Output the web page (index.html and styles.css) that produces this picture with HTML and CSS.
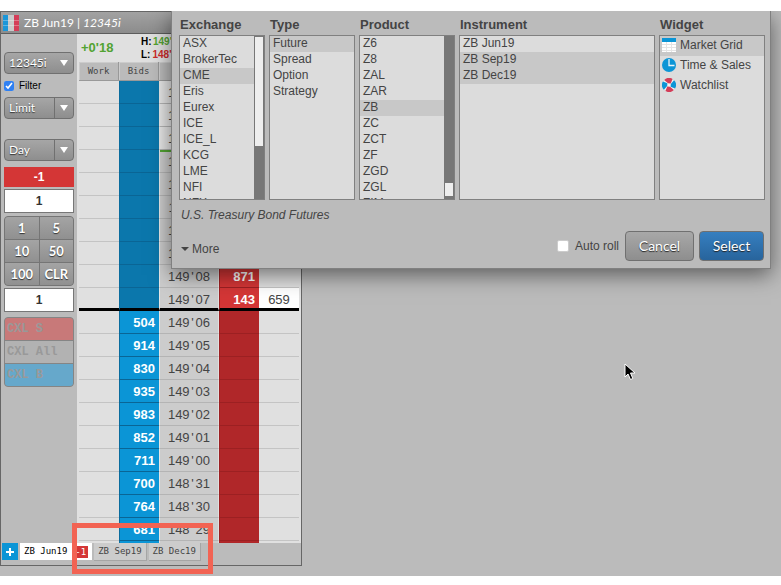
FILE: index.html
```html
<!DOCTYPE html>
<html lang="en">
<head>
<meta charset="utf-8">
<title>Market workspace</title>
<link rel="stylesheet" href="styles.css">
</head>
<body>
<main class="desktop">
  <section class="trader">
    <header class="titlebar">
      <svg class="logo" width="16" height="16" viewBox="0 0 16 16" aria-hidden="true">
        <rect width="5" height="16" fill="#1b96d8"/><rect x="5" width="6" height="16" fill="#c9c9c9"/><rect x="11" width="5" height="16" fill="#d43d58"/>
        <path d="M0 5.5h16M0 10.5h16" stroke="#fff" stroke-opacity=".3"/>
      </svg>
      <h1>ZB Jun19 | <em>12345i</em></h1>
    </header>
    <div class="body">
      <form class="sidebar">
        <div class="drop"><select aria-label="Account"><option>12345i</option></select></div>
        <label class="filter"><input type="checkbox" checked>Filter</label>
        <div class="drop split"><select aria-label="Order type"><option>Limit</option></select></div>
        <div class="drop split tif"><select aria-label="Time in force"><option>Day</option></select></div>
        <output class="position">-1</output>
        <input class="qty" type="text" value="1" aria-label="Quantity">
        <div class="keypad">
          <button type="button">1</button><button type="button">5</button>
          <button type="button">10</button><button type="button">50</button>
          <button type="button">100</button><button type="button">CLR</button>
        </div>
        <input class="qty" type="text" value="1" aria-label="Second quantity">
        <div class="cancel">
          <button type="button" class="sell" disabled>CXL S</button>
          <button type="button" disabled>CXL All</button>
          <button type="button" class="buy" disabled>CXL B</button>
        </div>
      </form>
      <div class="ladder">
        <div class="stats">
          <strong class="net">+0'18</strong>
          <dl>
            <div><dt>H:</dt><dd class="up">149'</dd></div>
            <div><dt>L:</dt><dd class="down">148'</dd></div>
          </dl>
        </div>
        <table>
          <thead><tr><th>Work</th><th>Bids</th><th class="wide"></th><th></th><th></th></tr></thead>
          <tbody class="above">
            <tr class="out"><td></td><td></td><td>149<i>'</i>16</td><td></td><td></td></tr>
            <tr class="out"><td></td><td></td><td>149<i>'</i>15</td><td></td><td></td></tr>
            <tr class="out"><td></td><td></td><td>149<i>'</i>14</td><td></td><td></td></tr>
            <tr class="high"><td></td><td></td><td>149<i>'</i>13</td><td></td><td></td></tr>
            <tr><td></td><td></td><td>149<i>'</i>12</td><td></td><td></td></tr>
            <tr><td></td><td></td><td>149<i>'</i>11</td><td></td><td></td></tr>
            <tr><td></td><td></td><td>149<i>'</i>10</td><td></td><td></td></tr>
            <tr><td></td><td></td><td>149<i>'</i>09</td><td></td><td></td></tr>
            <tr><td></td><td></td><td>149<i>'</i>08</td><td>871</td><td></td></tr>
            <tr class="inside"><td></td><td></td><td>149<i>'</i>07</td><td>143</td><td class="last">659</td></tr>
          </tbody>
          <tbody class="below">
            <tr><td></td><td>504</td><td>149<i>'</i>06</td><td></td><td></td></tr>
            <tr><td></td><td>914</td><td>149<i>'</i>05</td><td></td><td></td></tr>
            <tr><td></td><td>830</td><td>149<i>'</i>04</td><td></td><td></td></tr>
            <tr><td></td><td>935</td><td>149<i>'</i>03</td><td></td><td></td></tr>
            <tr><td></td><td>983</td><td>149<i>'</i>02</td><td></td><td></td></tr>
            <tr><td></td><td>852</td><td>149<i>'</i>01</td><td></td><td></td></tr>
            <tr><td></td><td>711</td><td>149<i>'</i>00</td><td></td><td></td></tr>
            <tr><td></td><td>700</td><td>148<i>'</i>31</td><td></td><td></td></tr>
            <tr><td></td><td>764</td><td>148<i>'</i>30</td><td></td><td></td></tr>
            <tr><td></td><td>681</td><td>148<i>'</i>29</td><td></td><td></td></tr>
            <tr class="stub"><td></td><td></td><td></td><td></td><td></td></tr>
          </tbody>
        </table>
      </div>
    </div>
    <nav class="tabs">
      <button type="button" class="add" aria-label="Add tab"><svg width="10" height="10" viewBox="0 0 10 10" aria-hidden="true"><path d="M5 1v8M1 5h8" stroke="#fff" stroke-width="2"/></svg></button>
      <button type="button" class="tab active">ZB Jun19<span class="badge">-1</span></button>
      <button type="button" class="tab">ZB Sep19</button>
      <button type="button" class="tab">ZB Dec19</button>
    </nav>
  </section>

  <section class="dialog" role="dialog" aria-label="Select instrument">
    <div class="columns">
      <div class="col exchange">
        <h2>Exchange</h2>
        <div class="list">
          <ul>
            <li><button type="button">ASX</button></li>
            <li><button type="button">BrokerTec</button></li>
            <li><button type="button" class="on">CME</button></li>
            <li><button type="button">Eris</button></li>
            <li><button type="button">Eurex</button></li>
            <li><button type="button">ICE</button></li>
            <li><button type="button">ICE_L</button></li>
            <li><button type="button">KCG</button></li>
            <li><button type="button">LME</button></li>
            <li><button type="button">NFI</button></li>
            <li><button type="button">NFX</button></li>
          </ul>
          <div class="track"><div class="thumb"></div></div>
        </div>
      </div>
      <div class="col type">
        <h2>Type</h2>
        <div class="list">
          <ul>
            <li><button type="button" class="on">Future</button></li>
            <li><button type="button">Spread</button></li>
            <li><button type="button">Option</button></li>
            <li><button type="button">Strategy</button></li>
          </ul>
        </div>
      </div>
      <div class="col product">
        <h2>Product</h2>
        <div class="list">
          <ul>
            <li><button type="button">Z6</button></li>
            <li><button type="button">Z8</button></li>
            <li><button type="button">ZAL</button></li>
            <li><button type="button">ZAR</button></li>
            <li><button type="button" class="on">ZB</button></li>
            <li><button type="button">ZC</button></li>
            <li><button type="button">ZCT</button></li>
            <li><button type="button">ZF</button></li>
            <li><button type="button">ZGD</button></li>
            <li><button type="button">ZGL</button></li>
            <li><button type="button">ZIM</button></li>
          </ul>
          <div class="track end"><div class="thumb"></div></div>
        </div>
      </div>
      <div class="col instrument">
        <h2>Instrument</h2>
        <div class="list">
          <ul>
            <li><button type="button">ZB Jun19</button></li>
            <li><button type="button" class="on">ZB Sep19</button></li>
            <li><button type="button" class="on">ZB Dec19</button></li>
          </ul>
        </div>
      </div>
      <div class="col widget">
        <h2>Widget</h2>
        <div class="list">
          <ul>
            <li><button type="button" class="on">
              <svg width="14" height="14" viewBox="0 0 14 14" aria-hidden="true"><path fill="#fff" d="M0 0h14v14H0z"/><path fill="#0b95d6" d="M0 0h14v4H0z"/><path d="M0 6.500h14M0 9.500h14M0 12.500h14M4.500 4v10M9.500 4v10" stroke="#e4e4e4" fill="none"/></svg>Market Grid</button></li>
            <li><button type="button">
              <svg width="14" height="14" viewBox="0 0 14 14" aria-hidden="true"><circle cx="7" cy="7" r="7" fill="#0b95d6"/><path d="M7 1v6.500h5.500" stroke="#e8f4fa" stroke-width="1.300" fill="none"/></svg>Time &amp; Sales</button></li>
            <li><button type="button">
              <svg width="14" height="14" viewBox="0 0 14 14" aria-hidden="true"><circle cx="7" cy="7" r="6.500" fill="#f1f1f1"/><path fill="#d43d58" d="M2.200 1.900A7 7 0 0 1 10.500.900L8.800 5.400 6 5.200ZM11.800 12.100A7 7 0 0 1 3.500 13.100L5.200 8.600 8 8.800Z"/><path fill="#0b95d6" d="M12.100 2.200A7 7 0 0 1 13.100 10.500L8.600 8.800 8.800 6ZM1.900 11.800A7 7 0 0 1 .900 3.500L5.400 5.200 5.200 8Z"/></svg>Watchlist</button></li>
          </ul>
        </div>
      </div>
    </div>
    <p class="desc">U.S. Treasury Bond Futures</p>
    <footer class="actions">
      <button type="button" class="more"><svg width="8" height="4" viewBox="0 0 8 4" aria-hidden="true"><path d="M0 0h8L4 4z" fill="#444"/></svg>More</button>
      <label class="roll"><input type="checkbox">Auto roll</label>
      <button type="button" class="btn">Cancel</button>
      <button type="button" class="btn primary">Select</button>
    </footer>
  </section>

  <div class="highlight"></div>
  <svg class="pointer" width="12" height="18" viewBox="0 0 12 18" aria-hidden="true"><path d="M1 1v13l3-3 2.500 5.500 2.300-1L6.500 10H11z" fill="#000" stroke="#fff"/></svg>
</main>
</body>
</html>
```

FILE: styles.css
```css
* { box-sizing: border-box; }

body {
  margin: 0;
  padding: 11px 0 9px;
  background: #fff;
  color: #444;
  font: 12px/16px "Liberation Sans", Arial, sans-serif;
}

h1, h2, p, ul, dl, dd { margin: 0; padding: 0; }
ul { list-style: none; }

button, input, select { margin: 0; padding: 0; border: 0; font: inherit; color: inherit; }

.desktop {
  position: relative;
  min-height: calc(100vh - 20px);
  background: #bbb;
  overflow: hidden;
}

/* Ladder window */
.trader {
  width: 302px;
  border: 1px solid #666;
  background: #bbb;
}

.titlebar {
  display: flex;
  align-items: center;
  gap: 5px;
  height: 22px;
  padding-left: 2px;
  border-bottom: 1px solid #5c5c5c;
  background: linear-gradient(#a2a2a2, #8c8c8c);
  color: #fff;
}

.titlebar h1 { font: 12px/20px Lato, sans-serif; }

.body { display: flex; }

.sidebar {
  display: flex;
  flex-direction: column;
  flex: none;
  width: 76px;
  padding: 18px 3px 0;
}

.drop {
  position: relative;
  height: 22px;
  border: 1px solid #707070;
  border-radius: 4px;
  background: linear-gradient(#a6a6a6, #8e8e8e);
}

.drop select {
  appearance: none;
  display: block;
  width: 100%;
  height: 20px;
  padding-left: 4px;
  background: none;
  color: #fff;
  font: 12px/20px Lato, sans-serif;
  text-shadow: 0 1px 1px #333;
}

.drop::after {
  content: "";
  position: absolute;
  top: 7px;
  right: 5px;
  border: 4px solid transparent;
  border-top: 6px solid #fff;
  border-bottom: 0;
}

.split::before {
  content: "";
  position: absolute;
  top: 0;
  bottom: 0;
  right: 18px;
  border-left: 1px solid #707070;
}

.filter {
  display: flex;
  align-items: center;
  gap: 5px;
  height: 23px;
  color: #000;
  font-size: 10px;
}

.filter input { width: 10px; height: 10px; accent-color: #2f80f2; }

.tif { margin: 20px 0 6px; }

.position {
  height: 20px;
  margin-bottom: 2px;
  background: #d43636;
  color: #fff;
  font: bold 12px/20px "Liberation Sans", sans-serif;
  text-align: center;
}

.qty {
  width: 100%;
  height: 24px;
  border: 1px solid #777;
  background: #fff;
  color: #333;
  font: bold 12px/22px "Liberation Sans", sans-serif;
  text-align: center;
}

.keypad {
  display: grid;
  grid-template-columns: 1fr 1fr;
  gap: 1px;
  margin: 3px 0 2px;
  border: 1px solid #757575;
  border-radius: 4px;
  background: #757575;
  overflow: hidden;
}

.keypad button {
  height: 22px;
  background: linear-gradient(#a4a4a4, #909090);
  color: #fff;
  font: bold 13px/22px Lato, sans-serif;
  text-shadow: 0 1px 1px #333;
}

.cancel {
  display: grid;
  gap: 1px;
  margin-top: 5px;
  border: 1px solid #858585;
  border-radius: 4px;
  background: #858585;
  overflow: hidden;
}

.cancel button {
  height: 22px;
  padding-left: 2px;
  background: #b2b2b2;
  color: #999;
  font: bold 12px/22px "Liberation Mono", monospace;
  text-align: left;
}

.cancel .sell { background: #c87979; }
.cancel .buy { background: #66a8cb; }

.ladder { flex: 1; min-width: 0; background: #e0e0e0; }

.stats {
  display: flex;
  align-items: center;
  justify-content: space-between;
  height: 28px;
  padding: 0 130px 0 4px;
  white-space: nowrap;
}

.net { color: #52a332; font-size: 13px; }

.stats dl { width: 30px; font: bold 10px/13px "Liberation Sans", sans-serif; }
.stats dl div { display: flex; gap: 2px; }
.stats dt { width: 10px; color: #000; text-align: right; }
.up { color: #52a332; }
.down { color: #cc2a2a; }

table {
  width: 220px;
  margin-left: 2px;
  table-layout: fixed;
  border-collapse: separate;
  border-spacing: 0;
}

th {
  width: 40px;
  height: 19px;
  padding: 0;
  border: solid #999;
  border-width: 0 1px 1px 0;
  background: #bbb;
  box-shadow: inset 1px 1px #ccc;
  font: 9px/16px "DejaVu Sans Mono", monospace;
}

th.wide { width: 60px; }

td {
  height: 23px;
  padding: 3px 0 0;
  border-bottom: 1px solid #c4c4c4;
  font: 13px/17px "Liberation Sans", sans-serif;
  text-align: center;
  vertical-align: top;
}

td:nth-child(2), td:nth-child(4) {
  padding-right: 4px;
  border-left: 1px solid #0a6c9e;
  border-bottom-color: #0a6595;
  background: #0b95d6;
  color: #fff;
  font-weight: bold;
  text-align: right;
}

td:nth-child(3) {
  border-left: 1px solid #e6e6e6;
  border-right: 1px solid #e0e0e0;
  border-bottom-color: #b4b4b4;
  background: #ccc;
}

td i { display: inline-block; width: 6px; font-style: normal; }

td:nth-child(4) { border-color: #9c2022; background: #b02729; }

.above td:nth-child(2) { background: #0b77ac; }
.above td:nth-child(4) { background: #d43636; }
.out td:nth-child(3) { background: #e6e6e6; }
.high td:nth-child(3) { box-shadow: inset 0 2px #52a332; }
.inside td { border-bottom: 3px solid #000; }
.inside td:nth-child(n) { border-bottom-color: #000; }
.last { background: #fff; }
.stub td { height: 2px; padding: 0; border-bottom: 0; }

.tabs {
  display: flex;
  gap: 2px;
  padding: 0 1px 4px;
}

.add {
  display: grid;
  place-items: center;
  width: 16px;
  height: 17px;
  background: #0b95d6;
}

.tab {
  display: flex;
  align-items: center;
  height: 18px;
  padding: 0 4px;
  border: solid #a5a5a5;
  border-width: 0 1px 1px 0;
  background: #ccc;
  font: 9px/17px "DejaVu Sans Mono", monospace;
}

.tab.active {
  gap: 6px;
  height: 17px;
  border: 0;
  background: #fff;
  color: #000;
}

.badge { padding: 0 2px; background: #d43636; color: #fff; line-height: 12px; }

/* Instrument picker */
.dialog {
  position: absolute;
  top: 0;
  left: 171px;
  right: 10px;
  padding: 4px 5px 7px 7px;
  border: solid #808080;
  border-width: 0 1px 1px;
  background: #bbb;
  box-shadow: 0 6px 20px rgba(0, 0, 0, .5);
}

.columns { display: flex; gap: 4px; }
.col { flex: 0 0 86px; }
.product { flex-basis: 96px; }
.instrument { flex: 1; }
.widget { flex-basis: 106px; }

h2 { padding-left: 1px; font-size: 13px; line-height: 20px; }

.list {
  display: flex;
  height: 165px;
  border: 1px solid #808080;
  background: #dcdcdc;
  overflow: hidden;
}

.list ul { flex: 1; }

.list button {
  display: block;
  width: 100%;
  height: 16px;
  padding: 0 0 2px 3px;
  background: none;
  line-height: 14px;
  text-align: left;
}

.list .on { background: #c8c8c8; }

.widget .list button {
  display: flex;
  align-items: center;
  gap: 4px;
  height: 20px;
  padding-left: 2px;
}

.track { width: 10px; padding: 1px; background: #777; }
.thumb { height: 109px; background: #eee; }
.track.end { display: flex; align-items: flex-end; padding-bottom: 3px; }
.track.end .thumb { width: 8px; height: 13px; }

.desc { padding: 7px 2px 8px; font-style: italic; }

.actions { display: flex; align-items: center; margin-right: 1px; }

.more {
  display: flex;
  align-items: center;
  gap: 3px;
  margin-right: auto;
  padding: 6px 2px 0;
  background: none;
}

.roll { display: flex; align-items: center; gap: 6px; margin-right: 6px; }

.roll input {
  appearance: none;
  width: 12px;
  height: 12px;
  border: 1px solid #ccc;
  border-radius: 2px;
  background: #fff;
}

.btn {
  width: 69px;
  height: 30px;
  border: 1px solid #707070;
  border-radius: 4px;
  background: linear-gradient(#a8a8a8, #8e8e8e);
  color: #fff;
  font: 14px/26px Lato, sans-serif;
  text-shadow: 0 1px 1px #222;
}

.primary {
  width: 65px;
  margin-left: 5px;
  background: linear-gradient(#367fc0, #28649c);
}

/* Annotation and pointer above the workspace */
.highlight {
  position: absolute;
  top: 512px;
  left: 72px;
  width: 141px;
  height: 51px;
  border: 5px solid #f26353;
}

.pointer { position: absolute; top: 352px; left: 624px; }
```
